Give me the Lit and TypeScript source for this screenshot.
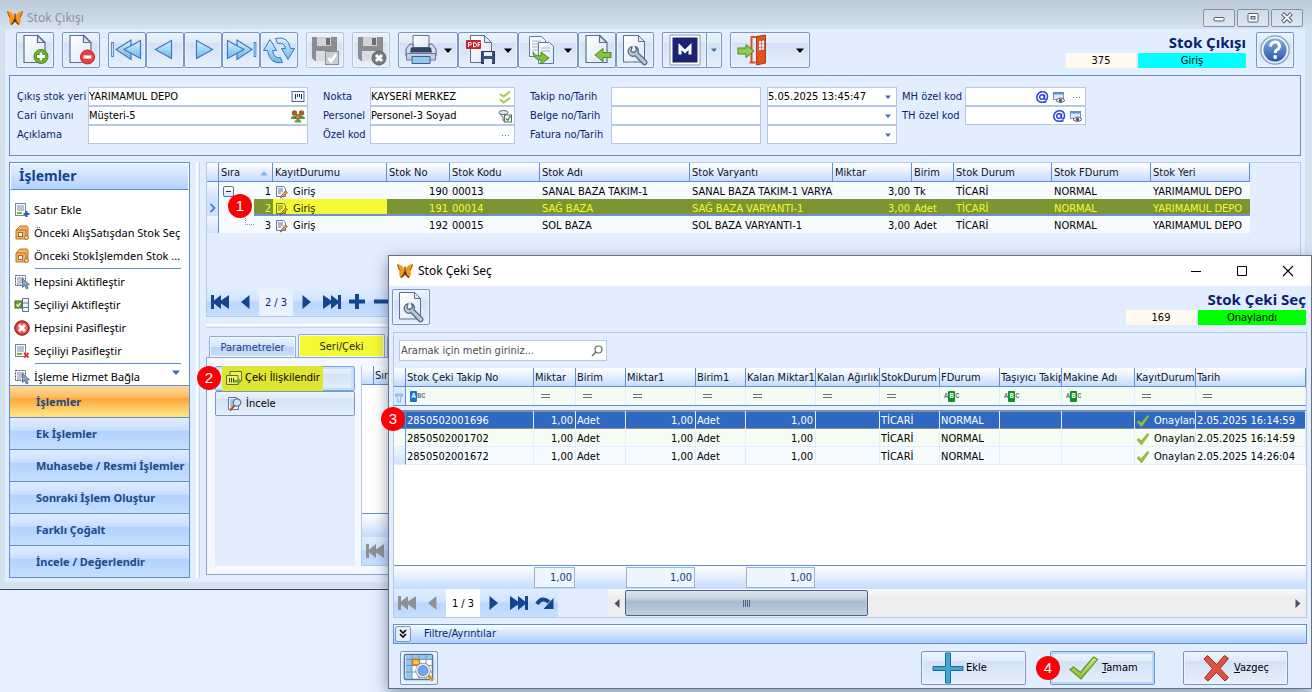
import { LitElement, html, css, svg, nothing } from "lit";
import type { TemplateResult } from "lit";
import { customElement } from "lit/decorators.js";
import { classMap } from "lit/directives/class-map.js";

const page = svg`<path d="M7 2.500h14l7 7v20H7z" fill="url(#paper)" stroke="#5b6f94" stroke-width="1.200"/><path d="M20.500 2.500v7h7z" fill="#dfe8f5" stroke="#5b6f94" stroke-width="1.200"/>`;
const floppyGrey = svg`<path d="M3 3h25v24H6l-3-3z" fill="#8b8d91"/><path d="M8 3h14v9H8z" fill="#cfd3d8"/><path d="M17 4h4v7h-4z" fill="#6c6e73"/><path d="M7 17h16v10H7z" fill="#dadde0"/>`;
const wrench = svg`<path d="M13 12.500a5 5 0 0 0-3 7.500 5 5 0 0 0 6 1.800l8 8.200a2.300 2.300 0 0 0 3.300-3.200l-8.300-8a5 5 0 0 0-1-5.300 5 5 0 0 0-1.500-1l1.200 3.500-2.700 2.500-3-1.200z" fill="#b9c6d6" stroke="#55657d" stroke-width="1.200"/>`;
const listBox = svg`<rect x="1.500" y="1.500" width="10" height="12" fill="#fff" stroke="#7184ad"/><path d="M3 4h7M3 6h7M3 8h7" stroke="#7184ad"/><path d="M3 10h5v2H3z" fill="#6fba2c"/>`;
const archive = svg`<path d="M3 4l3-3h7l1 2v9l-2 2H2V5z" fill="#f4b35e" stroke="#b5742c"/><path d="M2 5h10v9" fill="none" stroke="#b5742c"/><rect x="4.500" y="7.500" width="4" height="4" fill="#fff" stroke="#a3672a"/><circle cx="12.500" cy="12.500" r="2" fill="#f3d39b" stroke="#a3672a"/>`;
const pointerGrid = svg`<path d="M1.500 1.500h10v10h-10z" fill="none" stroke="#3e4f78" stroke-dasharray="2 1"/><path d="M3 4h7M3 6h7M3 8h7M3 10h4" stroke="#7787ac"/><path d="M8.500 4.500v9l2.200-2 1.700 3.500 1.800-.9-1.700-3.300h3z" fill="#8fa6c9" stroke="#415a86" stroke-width=".8"/>`;
const eye = svg`<path d="M1.500 2.500h10v7h-10z" fill="#dbe9fa" stroke="#7d93b5"/><path d="M1 2h11v2.500H1z" fill="#5c90cf"/><path d="M4 10.500q4.500-5 9 0-4.500 4-9 0z" fill="#fff" stroke="#4d5a70"/><circle cx="8.500" cy="10.500" r="1.700" fill="#4d5a70"/>`;

const ICONS: Record<string, [string, TemplateResult]> = {
  butterfly: ["0 0 16 16", svg`<path d="M7.500 7Q5 1 0 1q1 5 2.500 7.500Q1.500 11 3.500 15 6.500 15 8 9.500 9.500 15 12.500 15q2-4 1-6.500Q15 6 16 1q-5 0-8.500 6z" fill="#f39a1c"/><path d="M.5 1.500q1 3.500 2.500 6M15.500 1.500q-1 3.500-2.500 6" fill="none" stroke="#a3560f"/><path d="M8 3.500v9M4 14.500q3-1.500 3.500-5.500M12 14.500q-3-1.500-3.500-5.500" fill="none" stroke="#6a3410" stroke-width="1.200"/>`],
  docAdd: ["2 1 32 32", svg`${page}<circle cx="24" cy="23.500" r="7" fill="#76b82a" stroke="#4a7f14"/><path d="M24 19v9M19.500 23.500h9" stroke="#4d7d1b" stroke-width="4.500"/><path d="M24 19.500v8M20 23.500h8" stroke="#fff" stroke-width="2.800"/>`],
  docRemove: ["2 1 32 32", svg`${page}<circle cx="24.500" cy="24" r="7" fill="#e8403f" stroke="#c22"/><path d="M20.500 24h8" stroke="#fff" stroke-width="3.200"/>`],
  first: ["0 0 32 32", svg`<path d="M1.500 8v15" stroke="#3f78bd" stroke-width="2.600"/><path d="M1.500 9v13" stroke="#bfe4fb" stroke-width="1"/><path d="M20 6v19.500L5 15.500z" fill="url(#sky)" stroke="#3f78bd" stroke-width="1.200"/><path d="M29.500 6.500v18L13 15.500z" fill="url(#sky)" stroke="#3f78bd" stroke-width="1.200"/>`],
  prev: ["0 0 32 32", svg`<path d="M22.500 6.500v18L6.500 15.500z" fill="url(#sky)" stroke="#3f78bd" stroke-width="1.200"/>`],
  next: ["0 0 32 32", svg`<path d="M9.500 6.500v18l16-9z" fill="url(#sky)" stroke="#3f78bd" stroke-width="1.200"/>`],
  last: ["0 0 32 32", svg`<path d="M12 6v19.500l15-10z" fill="url(#sky)" stroke="#3f78bd" stroke-width="1.200"/><path d="M2.500 6.500v18l16.500-9z" fill="url(#sky)" stroke="#3f78bd" stroke-width="1.200"/><path d="M30 8v15" stroke="#3f78bd" stroke-width="2.600"/><path d="M30 9v13" stroke="#bfe4fb"/>`],
  refresh: ["0 0 32 32", svg`<path d="M12.500 4.500Q25 1.500 27.500 14.500h4l-6.500 11-6.500-11h4Q21.500 8 14.500 9.500z" fill="url(#sky)" stroke="#3f78bd"/><path d="M19.500 28.500Q7 31 4.500 16.500H.5l6.500-11 6.500 11h-4Q11 25 17.500 23.500z" fill="url(#sky)" stroke="#3f78bd"/>`],
  saveCheck: ["0 0 32 32", svg`${floppyGrey}<rect x="16.500" y="17.500" width="13" height="13" fill="#c9ccd0" stroke="#8d9095"/><path d="M19.500 24l2.500 3.500 5-7.500" fill="none" stroke="#fff" stroke-width="2.500"/>`],
  saveCancel: ["0 0 32 32", svg`${floppyGrey}<circle cx="24" cy="24" r="7" fill="#77797d" stroke="#606266"/><path d="M21 21l6 6M27 21l-6 6" stroke="#fff" stroke-width="3"/>`],
  printer: ["0 0 32 32", svg`<path d="M8 1.500h16v12H8z" fill="url(#paper)" stroke="#66748d"/><path d="M5 10h3v6h16v-6h3l4 5v7H1v-7z" fill="#d6dfed" stroke="#51617f"/><path d="M6 13.500h20l1 5H5z" fill="#35425f"/><path d="M1.500 19.500h29V26h-29z" fill="#c3cfe2" stroke="#66799c"/><path d="M7 22.500h18v7H7z" fill="#8fcaf3" stroke="#4a5d82"/>`],
  pdf: ["0 0 32 32", svg`<path d="M5.500 1.500h14l7 7v20h-21z" fill="url(#paper)" stroke="#5b6f94"/><path d="M19.500 1.500v7h7z" fill="#dfe8f5" stroke="#5b6f94"/><rect x="1" y="6" width="15" height="9" rx="1" fill="#cf2228"/><path d="M3.500 13V8.500H5q1.500 0 1.500 1.200T5 11H3.500M8.500 8.500v4.500q3 0 3-2.200t-3-2.300M13 13V8.500h2.500M13 10.700h2" stroke="#fff" fill="none"/><path d="M16.500 17.500h13v12h-13z" fill="#3c5378" stroke="#24344f"/><path d="M19 18h8v4h-8zM19 25h8v5h-8z" fill="#e6edf6"/>`],
  copy: ["0 0 32 32", svg`<path d="M4.500 2.500h12l4 4v16h-16z" fill="url(#paper)" stroke="#66799c"/><path d="M7 7h9M7 10h9M7 13h9M7 16h9" stroke="#9fb2cf"/><path d="M13.500 8.500h11l4 4v17h-15z" fill="url(#paper)" stroke="#66799c"/><path d="M16 14h9M16 17h9" stroke="#9fb2cf"/><path d="M8 18q1 4 8 4v-4l8 6-8 6v-4Q9 26 8 18z" fill="#7fc241" stroke="#4b8a1b"/>`],
  importDoc: ["2 1 32 32", svg`${page}<path d="M16 22l8-6.500v4h8v5h-8v4z" fill="#86c34a" stroke="#4b8a1b"/>`],
  wrenchDoc: ["0 0 32 32", svg`<path d="M4.500 1.500h15l6 6v20.500h-21z" fill="url(#paper)" stroke="#5b6f94"/><path d="M19.500 1.500v6h6z" fill="#dfe8f5" stroke="#5b6f94"/>${wrench}`],
  mBadge: ["0 0 32 32", svg`<path d="M1 1h30v30H1z" fill="#fff" stroke="#8a96b8"/><path d="M3.500 3.500h25v25h-25z" fill="#1a2470"/><path d="M11 20.500v-8l5 5 5-5v8" fill="none" stroke="#fff" stroke-width="3"/>`],
  door: ["0 0 32 32", svg`<path d="M15.500 28V3h5M13.500 28.500h6" fill="none" stroke="#d9501c" stroke-width="2"/><path d="M20.500 2.500l9-1.500v28l-9 2z" fill="#e0531f" stroke="#a93c13"/><path d="M22.500 7l6-1v10l-6 .8z" fill="#fbeedd" stroke="#a93c13" stroke-width=".6"/><path d="M25.500 6.500v10M22.500 10l6-.5M22.500 13.500l6-.5" stroke="#b26" stroke-width=".5"/><path d="M2 14h8V10.500l8 6.500-8 6.500V20H2z" fill="#8fca55" stroke="#4b8a1b"/>`],
  help: ["0 0 32 32", svg`<circle cx="16" cy="16" r="14" fill="url(#helpBall)" stroke="#8e9bb3" stroke-width="1.500"/><circle cx="16" cy="16" r="12.500" fill="none" stroke="#e9f1fb" stroke-width="2"/><path d="M11.500 12.500q.5-4.500 4.500-4.500t4.500 4q0 2.500-2.500 3.700-1.800 1-1.800 3.300" fill="none" stroke="#fff" stroke-width="3"/><circle cx="16.200" cy="23" r="1.900" fill="#fff"/>`],
  barcode: ["0 0 14 14", svg`<rect x="1" y="1.500" width="12" height="10" fill="#f5f8fe" stroke="#4c66ad"/><path d="M4.500 4v5M6.500 4v3M8.500 4v3M10.500 4v5" stroke="#222b4a"/>`],
  people: ["0 0 14 14", svg`<circle cx="3.500" cy="4" r="2.700" fill="#a4622d"/><circle cx="10.500" cy="4" r="2.700" fill="#a4622d"/><path d="M0 10q0-3 3-3t3 3M8 10q0-3 3-3t3 3" fill="#4f9a3c"/><circle cx="7" cy="8" r="2.500" fill="#c98545" stroke="#7d451b" stroke-width=".8"/><path d="M3.500 13.500q0-3 3.500-3t3.500 3z" fill="#58a743"/>`],
  checks: ["0 0 14 14", svg`<path d="M2 4L5.500 6.500 12 1.500M2 9.500L5.500 12.500 12 8" fill="none" stroke="#a5cc4b" stroke-width="2"/>`],
  filterCheck: ["0 0 14 14", svg`<ellipse cx="5.500" cy="3.500" rx="4.500" ry="2" fill="#e7edf5" stroke="#56647d"/><path d="M1.500 4.500L5 8.500v3l1.500 1V8" fill="#cfd8e6" stroke="#56647d"/><rect x="6.500" y="6" width="7" height="7" fill="#fff" stroke="#56647d"/><path d="M8 9.500l1.700 1.800L12.500 7" fill="none" stroke="#4b9a1d" stroke-width="1.400"/>`],
  dots: ["0 0 14 14", svg`<path d="M4 7.500h1M7 7.500h1M10 7.500h1" stroke="#4d7ab8"/>`],
  at: ["0 0 14 14", svg`<path d="M9.500 4.500v4q.2 1.500 1.500 1.500 1.500-.5 1.500-4Q12 1.700 7.500 1.700T1.700 7q.3 5.300 5.800 5.300 2 0 4-.8" fill="none" stroke="#2a45e0" stroke-width="1.500"/><circle cx="7" cy="7" r="2.300" fill="none" stroke="#2a45e0" stroke-width="1.500"/>`],
  eye: ["0 0 14 14", eye],
  caret: ["0 0 8 5", svg`<path d="M0 .5h8L4 5z" fill="currentColor"/>`],
  rowAdd: ["0 0 16 16", svg`${listBox}<path d="M12.500 9v6M9.500 12h6" stroke="#2c64ad" stroke-width="2.200"/>`],
  archive: ["0 0 16 16", archive],
  pointerGrid: ["0 0 16 16", pointerGrid],
  selActive: ["0 0 16 16", svg`<path d="M8.500 1.500h6v13h-6zM8.500 6h6M8.500 10.500h6" fill="#eef3fb" stroke="#5c72a5"/><rect x="1" y="4" width="7" height="7" fill="#6da33a" stroke="#3c6e17"/><path d="M2.500 7.500l1.600 1.700L6.500 6" fill="none" stroke="#fff" stroke-width="1.200"/>`],
  cancelBall: ["0 0 16 16", svg`<circle cx="8" cy="8" r="7.300" fill="#d2312f" stroke="#8e1f1d"/><circle cx="8" cy="8" r="5.500" fill="#e46a65"/><path d="M5 5l6 6M11 5l-6 6" stroke="#fff" stroke-width="2.600"/>`],
  rowDel: ["0 0 16 16", svg`${listBox}<path d="M10 10l4.500 4.500M14.500 10L10 14.500" stroke="#d33" stroke-width="2"/>`],
  linkBarcode: ["0 0 16 16", svg`<path d="M4 1.500h11.500v9H4z" fill="#f1f55a" stroke="#5a6f48"/><path d="M.5 5.500H12v9H.500z" fill="#f1f55a" stroke="#5a6f48"/><path d="M3.500 8v4.500M5.500 8v4.500M7.500 8v4.500" stroke="#33462e"/><path d="M8 10h4V7.500l3.500 3.800L12 15v-2.500H8z" fill="#6fa53d"/>`],
  inspect: ["0 0 16 16", svg`<path d="M2.500 1.500h8l2 2v10h-10z" fill="#f3f7fd" stroke="#5c72a5"/><path d="M4 4h4M4 6h3M4 8h3M4 10h3" stroke="#5c8acb"/><circle cx="11" cy="6.500" r="3.700" fill="#cfe5f8" stroke="#58779f" stroke-width="1.300"/><path d="M8.500 9.500L4 14.500" stroke="#b4572c" stroke-width="2.200"/>`],
  note: ["0 0 14 14", svg`<path d="M1.500 1.500h7l2 2v8h-9z" fill="#f4f8fd" stroke="#607ba5"/><path d="M3 4h5M3 6h5M3 8h3" stroke="#607ba5"/><path d="M7 12l-1.500 1 .5-2 4.500-5 2 1.500z" fill="#eba85a" stroke="#8a4f27" stroke-width=".8"/>`],
  noteYellow: ["0 0 14 14", svg`<path d="M1.500 1.500h7l2 2v8h-9z" fill="#f6fb36" stroke="#5c7a33"/><path d="M3 4h5M3 6h5M3 8h3" stroke="#6e8a2e"/><path d="M7 12l-1.500 1 .5-2 4.500-5 2 1.500z" fill="#eba82a" stroke="#8a4f17" stroke-width=".8"/>`],
  nFirst: ["0 0 20 16", svg`<path d="M1 1h3v5.500L11 1v5.500L19 1v14l-8-5.500V15L4 9.500V15H1z" fill="currentColor"/>`],
  nPrev: ["0 0 20 16", svg`<path d="M13.500 1v14L5 8z" fill="currentColor"/>`],
  nNext: ["0 0 20 16", svg`<path d="M6.500 1v14L15 8z" fill="currentColor"/>`],
  nLast: ["0 0 20 16", svg`<path d="M19 1h-3v5.500L9 1v5.500L1 1v14l8-5.500V15l7-5.500V15h3z" fill="currentColor"/>`],
  nAdd: ["0 0 20 16", svg`<path d="M1 7.500h16M9 0v15" stroke="currentColor" stroke-width="4"/>`],
  nDel: ["0 0 20 16", svg`<path d="M0 7.500h16" stroke="currentColor" stroke-width="4"/>`],
  nRedo: ["0 0 20 16", svg`<path d="M2 9q5-8 12-2" fill="none" stroke="currentColor" stroke-width="4"/><path d="M18.500 3v11H8.500z" fill="currentColor"/>`],
  search: ["0 0 14 14", svg`<circle cx="8.500" cy="5.500" r="3.500" fill="none" stroke="#666" stroke-width="1.200"/><path d="M6 8l-4 4" stroke="#666" stroke-width="1.400"/>`],
  funnel: ["-1 -3 13 15", svg`<path d="M1 1.500h8v2L6.500 6v5h-3V6L1 3.500zM1 3.500h8" fill="#e3f0ff" stroke="#6a9fdc"/>`],
  rowMark: ["0 0 16 16", svg`<path d="M3.500 4l4 4-4 4" fill="none" stroke="#4d86cf" stroke-width="2"/>`],
  tick: ["0 0 14 14", svg`<path d="M1 8l2-1.500 2 2.500 6.500-7.500 1.500 1L5.500 13z" fill="#97c23c" stroke="#76a52a" stroke-width=".6"/>`],
  gridSearch: ["0 0 32 32", svg`<rect x="1.500" y="2.500" width="28" height="25" rx="1.500" fill="#fff" stroke="#56769f" stroke-width="1.500"/><path d="M3 3h26v4.500H9V27H3z" fill="#8fc7ea"/><path d="M9 3v24M16 3v24M23 3v24M3 7.500h26M3 13.500h26M3 20h26" stroke="#6c97c3" fill="none"/><path d="M9.500 7.500h7v5.500h-7z" fill="#fbc65a" stroke="#cf7417" stroke-width="1.400"/><circle cx="20" cy="18.500" r="6.200" fill="#6fa8ea" stroke="#74879f" stroke-width="3"/><circle cx="20" cy="18.500" r="6.200" fill="none" stroke="#e9eef4" stroke-width="1.600"/><path d="M25 23.500l5 5" stroke="#e0913c" stroke-width="3.200"/>`],
  bigPlus: ["0 0 32 32", svg`<path d="M13.500 1h5v13.500H31v4H18.500V31h-5V18.500H1v-4h12.500z" fill="#43a6d3" stroke="#1d6d9b"/>`],
  bigTick: ["0 0 32 32", svg`<path d="M2 17.500l3.500-2.500 7 5.500L25.500 5l4 2.500L13 27z" fill="url(#leaf)" stroke="#5f9320" stroke-width="1.200"/>`],
  bigCross: ["0 0 32 32", svg`<path d="M4 7l3.500-3.500 9 9 8-9 4 3-8.500 10 8.500 9-3.500 3.500-8.500-8.500L8 29l-3.500-3 8-9.500z" fill="#dc5344" stroke="#a8281c"/>`],
};

const icon = (name: string, cls = "") =>
  html`<svg class="icon ${cls}" viewBox=${ICONS[name][0]} aria-hidden="true">${ICONS[name][1]}</svg>`;

interface Column { label: string; width?: number; num?: boolean; filter?: string }

const INDICATOR_WIDTH = 12;
const STOCK_COLUMNS: Column[] = [
  { label: "Sıra", width: 54, num: true },
  { label: "KayıtDurumu", width: 114 },
  { label: "Stok No", width: 63, num: true },
  { label: "Stok Kodu", width: 90 },
  { label: "Stok Adı", width: 150 },
  { label: "Stok Varyantı", width: 143 },
  { label: "Miktar", width: 79, num: true },
  { label: "Birim", width: 42 },
  { label: "Stok Durum", width: 98 },
  { label: "Stok FDurum", width: 99 },
  { label: "Stok Yeri", width: 99 },
];
const STOCK_WIDTH = STOCK_COLUMNS.reduce((sum, c) => sum + (c.width ?? 0), INDICATOR_WIDTH);
const STOCK_ROWS = [
  ["1", "Giriş", "190", "00013", "SANAL BAZA TAKIM-1", "SANAL BAZA TAKIM-1 VARYANTI-1", "3,00", "Tk", "TİCARİ", "NORMAL", "YARIMAMUL DEPO"],
  ["2", "Giriş", "191", "00014", "SAĞ BAZA", "SAĞ BAZA VARYANTI-1", "3,00", "Adet", "TİCARİ", "NORMAL", "YARIMAMUL DEPO"],
  ["3", "Giriş", "192", "00015", "SOL BAZA", "SOL BAZA VARYANTI-1", "3,00", "Adet", "TİCARİ", "NORMAL", "YARIMAMUL DEPO"],
];

const PICK_COLUMNS: Column[] = [
  { label: "Stok Çeki Takip No", width: 128, filter: "blue" },
  { label: "Miktar", width: 42, num: true, filter: "eq" },
  { label: "Birim", width: 50, filter: "eq" },
  { label: "Miktar1", width: 70, num: true, filter: "eq" },
  { label: "Birim1", width: 50, filter: "eq" },
  { label: "Kalan Miktar1", width: 70, num: true, filter: "eq" },
  { label: "Kalan Ağırlık", width: 64, filter: "eq" },
  { label: "StokDurum", width: 60, filter: "eq" },
  { label: "FDurum", width: 60, filter: "green" },
  { label: "Taşıyıcı Takip", width: 62, filter: "green" },
  { label: "Makine Adı", width: 73, filter: "green" },
  { label: "KayıtDurumu", width: 61, filter: "eq" },
  { label: "Tarih", filter: "eq" },
];
const PICK_ROWS = [
  ["2850502001696", "1,00", "Adet", "1,00", "Adet", "1,00", "", "TİCARİ", "NORMAL", "", "", "Onaylandı", "2.05.2025 16:14:59"],
  ["2850502001702", "1,00", "Adet", "1,00", "Adet", "1,00", "", "TİCARİ", "NORMAL", "", "", "Onaylandı", "2.05.2025 16:14:59"],
  ["2850502001672", "1,00", "Adet", "1,00", "Adet", "1,00", "", "TİCARİ", "NORMAL", "", "", "Onaylandı", "2.05.2025 14:26:04"],
];
const PICK_SUMS = ["", "1,00", "", "1,00", "", "1,00", "", "", "", "", "", "", ""];

const TASKS: [string, string][][] = [
  [["rowAdd", "Satır Ekle"], ["archive", "Önceki AlışSatışdan Stok Seç"], ["archive", "Önceki Stokİşlemden Stok ..."]],
  [["pointerGrid", "Hepsini Aktifleştir"], ["selActive", "Seçiliyi Aktifleştir"], ["cancelBall", "Hepsini Pasifleştir"], ["rowDel", "Seçiliyi Pasifleştir"]],
];
const GROUPS = ["İşlemler", "Ek İşlemler", "Muhasebe / Resmi İşlemler", "Sonraki İşlem Oluştur", "Farklı Çoğalt", "İncele / Değerlendir"];

@customElement("app-root")
export class AppRoot extends LitElement {
  static styles = css`
    :host {
      display: block;
      position: relative;
      min-height: 100vh;
      overflow: hidden;
      background: #e3eeff;
      color: #000;
      font: 11px/14px "DejaVu Sans Condensed", "DejaVu Sans", sans-serif;
      --line: #5f8fd0;
      --soft: #b3c9e6;
      --navy: #0a1f70;
      --page: #e2eeff;
      --head: linear-gradient(#fff, #e3eeff 50%, #c3dbff);
      --glass: linear-gradient(#ebf3fd, #e0ebf9 28%, #d2e1f4 30%, #dbe7f7 60%, #e6f0fd);
      --mark: #f5f933;
      --label: "Noto Sans", "Open Sans", sans-serif;
    }
    * { box-sizing: border-box; }
    button, input { font: inherit; color: inherit; margin: 0; padding: 0; }
    button { border: 0; background: none; }
    .defs { position: absolute; width: 0; height: 0; }
    .icon { display: block; width: 16px; height: 16px; flex: none; }
    .i14 { width: 14px; height: 14px; }
    .i32 { width: 32px; height: 32px; }
    .nav-ic { width: 20px; height: 16px; }
    .car { width: 8px; height: 5px; }
    .tiny { width: 6px; height: 4px; margin-right: 3px; color: #3d6fae; }

    /* main window */
    .window { border-bottom: 1px solid #45434f; background: #d5e3f1; padding: 0 7px 7px 5px; }
    .caption { display: flex; align-items: center; justify-content: space-between; height: 29px; margin: 0 -7px 0 -5px; padding: 6px 9px 0 7px; background: linear-gradient(#bccad8, #d5e2ef); color: #8b929b; font: 12px/16px var(--label); }
    .caption-title { display: flex; align-items: center; gap: 4px; }
    .caption-buttons { display: flex; gap: 2px; }
    .caption-buttons button { display: flex; align-items: center; justify-content: center; width: 32px; height: 18px; border: 1px solid #8593a5; border-radius: 2px; background: linear-gradient(#d0dbe7, #dde7f2); }
    .client { background: var(--page); padding: 3px 4px 4px; }
    .toolbar { display: flex; gap: 8px; padding: 0 7px; }
    .tool-group { display: flex; }
    .tool { display: flex; align-items: center; justify-content: center; width: 38px; height: 36px; border: 1px solid #7796c2; border-radius: 2px; background: var(--glass); box-shadow: inset 0 0 0 1px #eef5ff; }
    .tool.drop { width: 60px; gap: 7px; }
    .tool.wide { width: 80px; gap: 28px; }
    .tool.body { width: 44px; border-right: 0; border-radius: 2px 0 0 2px; }
    .tool.side { width: 16px; border-radius: 0 2px 2px 0; }
    .tool.side .tiny { margin: 0; }
    .tool:disabled { border-color: #b4c4da; }
    .spacer { flex: 1; }
    .heading { text-align: right; }
    .heading h1 { margin: 0; height: 21px; font: bold 15px/21px var(--label); color: var(--navy); }
    .states { display: flex; gap: 2px; justify-content: flex-end; text-align: center; line-height: 15px; }
    .count { width: 70px; background: #fffaf0; }
    .state { width: 108px; background: #0ff; }
    .state.ok { background: #0f0; }
    .help { margin-left: 2px; }

    .form { display: flex; margin-top: 7px; padding: 11px 9px 11px 7px; border: 1px solid var(--line); color: var(--navy); }
    .fields { display: grid; grid-auto-rows: 19px; align-content: start; align-items: center; }
    .fields label { white-space: nowrap; }
    .f-a { grid-template-columns: 71px 220px; }
    .f-b { grid-template-columns: 47px 145px; margin-left: 15px; }
    .f-c { grid-template-columns: 81px 150px 136px; margin-left: 15px; }
    .f-d { grid-template-columns: 63px 121px; margin-left: 5px; }
    .f-c .box + .box { margin-left: 6px; }
    .box { display: flex; align-items: center; gap: 3px; height: 19px; padding-right: 2px; border: 1px solid var(--soft); background: #fff; color: #000; }
    .box input { flex: 1; min-width: 0; width: 100%; border: 0; outline: 0; background: none; height: 15px; }

    .work { display: flex; margin-top: 6px; }
    .sidebar { display: flex; flex-direction: column; width: 181px; border: 1px solid var(--line); background: #fff; flex: none; }
    .sidebar h2 { margin: 0; height: 27px; padding-left: 8px; border: 1px solid #fff; border-bottom: 1px solid var(--line); background: linear-gradient(#e6f0ff, #b3d2ff); font: bold 14px/24px var(--label); color: #15448f; }
    .tasks { flex: 1; padding: 8px 0 0 4px; font: 11px/23px var(--label); }
    .task { display: flex; align-items: center; gap: 4px; height: 23px; width: 100%; white-space: nowrap; text-align: left; }
    .task:last-child { margin-bottom: -3px; }
    .rule { height: 1px; margin: 1px 8px 1px 21px; background: var(--line); }
    .task .tiny { width: 8px; height: 5px; margin: 0 9px 8px auto; }
    .groups { display: flex; flex-direction: column; position: relative; }
    .group { height: 32px; padding-left: 26px; border-top: 1px solid var(--line); text-align: left; white-space: nowrap; background: linear-gradient(#e0edff, #c8deff 40%, #b2d1ff 42%, #c6dfff); color: #1f4a87; font: bold 11px/30px var(--label); }
    .group.on { background: linear-gradient(#fdd9a0, #fdbd62 35%, #fda63a 42%, #ffe07c 90%); }
    .splitter { width: 4px; margin: 0 6px; border-left: 2px solid #fff; border-right: 1px solid #bcd8fb; flex: none; }
    .main { flex: 1; min-width: 0; position: relative; }
    .panel { display: flex; flex-direction: column; border: 1px solid var(--soft); }
    .stock { height: 155px; }

    table { border-collapse: separate; border-spacing: 0; table-layout: fixed; align-self: flex-start; }
    .fill { width: 100%; }
    .c-ind { width: 12px; }
    th, td { padding: 0 2px; overflow: hidden; white-space: nowrap; text-align: left; font-weight: normal; }
    th { height: 19px; padding: 1px 1px 0; line-height: 17px; border-right: 1px solid var(--line); border-bottom: 1px solid var(--line); background: var(--head); color: #0d1526; }
    .stock th { padding: 2px 2px 0; line-height: 16px; }
    .num { text-align: right; }
    .stock td { height: 17px; padding-top: 2px; line-height: 15px; background: #f6fbff; }
    .stock td.ind, .pick td.ind { border-right: 1px solid var(--line); padding: 0; background: linear-gradient(#f5f9ff, #cfe2ff); }
    .stock tr.sel td { background: linear-gradient(#7a9531 15px, #6f91cf 15px); color: var(--mark); }
    .stock tr.sel td.ind { background: #cfe2ff; }
    .stock tr.sel td.mark { background: linear-gradient(var(--mark) 15px, #6f91cf 15px); color: #16250a; }
    .stock tr.sel td.first { background: linear-gradient(90deg, #f6fbff 35px, transparent 35px), linear-gradient(#7a9531 15px, #6f91cf 15px); }
    .th-in, .td-in, .tree { display: flex; align-items: center; justify-content: space-between; }
    .td-in { justify-content: flex-start; gap: 4px; }
    .sort { color: #86b4ec; transform: scaleY(-1); margin-right: 2px; }
    .expander { display: block; width: 11px; height: 11px; margin-left: 2px; border: 1px solid #5d6f8f; border-radius: 2px; background: linear-gradient(#fff, #dbe5f3); position: relative; }
    .expander::after { content: ""; position: absolute; left: 2px; right: 2px; top: 4px; height: 1px; background: #234; }
    .twig { width: 9px; height: 7px; margin: 0 0 8px 24px; border-left: 1px dotted #6a96cd; border-bottom: 1px dotted #6a96cd; }

    .nav { display: flex; height: 28px; background: linear-gradient(#e1edff, #d0e3ff 46%, #bad6ff 50%, #c6dfff); color: #14458f; }
    .nav button { display: flex; align-items: center; justify-content: center; width: 26px; }
    .nav button:disabled { color: #8f9194; }
    .nav .pos { width: 34px; background: #e8f1ff; text-align: center; line-height: 29px; color: var(--navy); }
    .hsplit { height: 4px; margin: 7px 0 6px; border-top: 2px solid #fff; border-bottom: 1px solid #bcd8fb; }

    .tabs { display: flex; gap: 2px; padding-left: 3px; align-items: flex-end; }
    .tab { height: 21px; width: 87px; padding-top: 2px; border: 1px solid #8fa9cd; border-bottom: 0; border-radius: 2px 2px 0 0; background: linear-gradient(#e9f2ff, #d5e4f8 50%, #b9d1f3 52%, #cfe0f8); box-shadow: inset 0 0 0 1px #f3f8ff; color: #17418c; }
    .tab.on { height: 23px; background: var(--mark); color: #1c2a12; }
    .tabpage { display: flex; gap: 6px; height: 218px; margin-bottom: 3px; padding: 8px; border: 1px solid #8fa9cd; background: #f5f9ff; }
    .actions { width: 140px; background: var(--page); flex: none; }
    .action { position: relative; display: flex; align-items: center; gap: 4px; width: 140px; height: 25px; padding-left: 10px; border: 1px solid #7c97c0; border-radius: 2px; background: var(--glass); }
    .action.on { border-color: #7da5dc; box-shadow: inset -1px 0 0 2px #c3e0ff; }
    .action .hl { display: flex; align-items: center; gap: 3px; margin: -3px 0 -2px -4px; padding-left: 4px; width: 101px; height: 25px; background: #dfe62f; flex: none; }
    .detail { flex: 1; display: flex; flex-direction: column; border: 1px solid var(--soft); border-top: 0; background: #fff; }
    .detail .foot { margin-top: auto; height: 24px; border-top: 1px solid var(--line); background: var(--head); }

    .badge { position: absolute; z-index: 3; display: flex; align-items: center; justify-content: center; width: 24px; height: 24px; border-radius: 50%; background: #fb0007; color: #fff; font: 15px/24px "Liberation Sans", sans-serif; }
    .b1 { left: 22px; top: 32px; }
    .b2 { left: -19px; top: -1px; }
    .b3 { left: -8px; top: 151px; }
    .b4 { left: -15px; top: 4px; }

    /* selection dialog */
    .dialog { position: absolute; left: 388px; right: 0; top: 255px; z-index: 2; border: 1px solid #6b7078; background: var(--page); box-shadow: 0 4px 14px rgba(20, 35, 70, .45); }
    .dlg-caption { display: flex; align-items: center; gap: 5px; height: 30px; padding: 0 17px 0 8px; background: #fff; font: 12px/16px var(--label); }
    .dlg-caption .sys { display: flex; gap: 34px; margin-left: auto; }
    .sysic { width: 12px; height: 12px; display: block; }
    .dlg-head { display: flex; justify-content: space-between; padding: 3px 5px 7px 3px; }
    .pick { margin: 0 4px; }
    .find { margin: 7px 5px; height: 21px; width: 208px; color: #333; }
    .find input { padding-left: 1px; }
    .find input::placeholder { color: #4b4b4b; opacity: 1; }
    .find-label { position: absolute; width: 1px; height: 1px; overflow: hidden; clip-path: inset(50%); }
    .rows { height: 197px; background: #fff; }
    .filter td { height: 18px; background: #f3fbf3; border-right: 1px solid #e2edff; padding: 0 4px; }
    .filter td.ind { background: #dceaff; padding: 0; }
    .filter .ind .icon { width: 11px; height: 17px; }
    .gap td { height: 6px; padding: 0; border-top: 1px solid var(--line); border-bottom: 1px solid var(--line); background: #e6f0ff; }
    .pick .data td { height: 18px; padding: 2px 2px 0 1px; line-height: 15px; border-right: 1px solid #e2edff; border-bottom: 1px solid #e2edff; background: #f6fbff; }
    .pick .data td.ind { background: linear-gradient(#f0f6ff, #cfe2ff); border-right-color: var(--line); }
    .pick .data.even td { background: #f4fcf3; }
    .pick .data.sel td { border-bottom: 0; padding-bottom: 1px; background: linear-gradient(#8e8f8c, #8e8f8c) 0 0 / 100% 1px no-repeat, linear-gradient(#8e8f8c, #8e8f8c) 0 100% / 100% 1px no-repeat, #2f68c3; color: #fff; }
    .eq { display: block; width: 9px; height: 4px; margin-left: 3px; border-top: 1px solid #6b7075; border-bottom: 1px solid #6b7075; }
    .abc { display: flex; font: bold 7px/11px "Liberation Mono", monospace; color: #777; }
    .abc span { text-align: center; }
    .abc .k { width: 7px; border-radius: 1px; color: #fff; background: #0a9426; }
    .abc.bl .k { background: #0c76d6; }
    .sums { background: var(--head); border-top: 1px solid var(--line); height: 24px; }
    .sums td { height: 23px; padding: 0 1px 0 0; }
    .sum { height: 21px; padding-right: 2px; border: 1px solid #94b5e0; background: #edf5ff; line-height: 20px; color: #1a3580; }
    .pick .nav-row { display: flex; height: 28px; }
    .pick .pos { background: #fff; color: #000; }
    .scroll { display: flex; flex: 1; margin-left: 50px; padding: 1px 0; background: linear-gradient(#fbfbfb, #ededed 30%); }
    .arrow { width: 17px; display: flex; align-items: center; justify-content: center; }
    .arrow svg { width: 6px; height: 9px; display: block; }
    .thumb { width: 243px; border: 1px solid #4f628c; border-radius: 2px; background: linear-gradient(#dbe3ec, #c9d3df 30%, #a8b9cf 45%, #c3d0de); display: flex; align-items: center; justify-content: center; gap: 1px; }
    .thumb i { width: 1px; height: 7px; background: #4f628c; }
    .arrow.end { margin-left: auto; }
    .fold { display: flex; align-items: center; gap: 13px; height: 20px; margin: 6px 4px 7px; padding: 0 1px; border: 1px solid var(--line); background: linear-gradient(#fff, #dcebff 30%, #aecfff); color: var(--navy); }
    .fold button { display: flex; align-items: center; justify-content: center; width: 16px; height: 16px; border: 1px solid #7c97c0; border-radius: 2px; background: #e4eefb; }
    .dlg-foot { display: flex; padding: 0 23px 3px 11px; }
    .push { position: relative; display: flex; align-items: center; gap: 2px; width: 105px; height: 34px; padding-left: 10px; border: 1px solid #7796c2; border-radius: 2px; background: var(--glass); box-shadow: inset 0 0 0 1px #eef5ff; }
    .push.ok { margin: 0 28px 0 24px; padding-left: 17px; box-shadow: inset 0 0 0 2px #b4dbff; }
    .push.no { padding-left: 16px; }
    .tool.low { height: 34px; }
    u { text-underline-offset: 1px; }
  `;

  private tool(name: string, label: string, cls = "", disabled = false) {
    return html`<button class="tool ${cls}" type="button" title=${label} ?disabled=${disabled}>${icon(name, "i32")}</button>`;
  }

  private drop(name: string, label: string, cls = "drop") {
    return html`<button class="tool ${cls}" type="button" title=${label}>${icon(name, "i32")}${icon("caret", "car")}</button>`;
  }

  private field(id: string, value: string, icons: string[] = [], aria = "") {
    return html`<div class="box">
      <input id=${id} type="text" .value=${value} aria-label=${aria || nothing} />
      ${icons.map((n) => (n === "caret" ? icon(n, "tiny") : icon(n, "i14")))}
    </div>`;
  }

  private cols(columns: Column[]) {
    return html`<colgroup><col class="c-ind" />${columns.map((c) =>
      c.width ? html`<col style="width:${c.width}px" />` : html`<col />`)}</colgroup>`;
  }

  private navButtons(names: [string, string, boolean?][]) {
    return names.map(([n, t, off]) =>
      html`<button type="button" title=${t} ?disabled=${!!off}>${icon(n, "nav-ic")}</button>`);
  }

  private renderToolbar() {
    return html`<div class="toolbar">
      ${this.tool("docAdd", "Yeni")} ${this.tool("docRemove", "Sil")}
      <div class="tool-group">
        ${this.tool("first", "İlk")}${this.tool("prev", "Önceki")}${this.tool("next", "Sonraki")}${this.tool("last", "Son")}${this.tool("refresh", "Yenile")}
      </div>
      ${this.tool("saveCheck", "Kaydet", "", true)} ${this.tool("saveCancel", "İptal", "", true)}
      <div class="tool-group">
        ${this.drop("printer", "Yazdır")}${this.drop("pdf", "PDF")}${this.drop("copy", "Kopyala")}${this.tool("importDoc", "Aktar")}${this.tool("wrenchDoc", "Ayarlar")}
      </div>
      <div class="tool-group">
        <button class="tool body" type="button" title="M">${icon("mBadge", "i32")}</button>
        <button class="tool side" type="button" title="Seçenekler">${icon("caret", "tiny")}</button>
      </div>
      ${this.drop("door", "Çıkış", "wide")}
      <div class="spacer"></div>
      <div class="heading">
        <h1>Stok Çıkışı</h1>
        <div class="states"><span class="count">375</span><span class="state">Giriş</span></div>
      </div>
      ${this.tool("help", "Yardım", "help")}
    </div>`;
  }

  private renderForm() {
    return html`<form class="form">
      <div class="fields f-a">
        <label for="yer">Çıkış stok yeri</label>${this.field("yer", "YARIMAMUL DEPO", ["barcode"])}
        <label for="cari">Cari ünvanı</label>${this.field("cari", "Müşteri-5", ["people"])}
        <label for="acik">Açıklama</label>${this.field("acik", "")}
      </div>
      <div class="fields f-b">
        <label for="nokta">Nokta</label>${this.field("nokta", "KAYSERİ MERKEZ", ["checks"])}
        <label for="pers">Personel</label>${this.field("pers", "Personel-3 Soyad", ["filterCheck"])}
        <label for="ozel">Özel kod</label>${this.field("ozel", "", ["dots"])}
      </div>
      <div class="fields f-c">
        <label for="takip">Takip no/Tarih</label>${this.field("takip", "")}${this.field("takipT", "5.05.2025 13:45:47", ["caret"], "Takip tarihi")}
        <label for="belge">Belge no/Tarih</label>${this.field("belge", "")}${this.field("belgeT", "", ["caret"], "Belge tarihi")}
        <label for="fatura">Fatura no/Tarih</label>${this.field("fatura", "")}${this.field("faturaT", "", ["caret"], "Fatura tarihi")}
      </div>
      <div class="fields f-d">
        <label for="mh">MH özel kod</label>${this.field("mh", "", ["at", "eye", "dots"])}
        <label for="th">TH özel kod</label>${this.field("th", "", ["at", "eye"])}
      </div>
    </form>`;
  }

  private renderSidebar() {
    return html`<nav class="sidebar">
      <h2>İşlemler</h2>
      <div class="tasks">
        ${TASKS.map((set) => html`${set.map(([n, t]) =>
          html`<button class="task" type="button">${icon(n)}<span>${t}</span></button>`)}<div class="rule"></div>`)}
        <button class="task" type="button">${icon("pointerGrid")}<span>İşleme Hizmet Bağla</span>${icon("caret", "tiny")}</button>
      </div>
      <div class="groups">
        ${GROUPS.map((g, i) => html`<button type="button" class=${classMap({ group: true, on: i === 0 })}>${g}</button>`)}
      </div>
    </nav>`;
  }

  private renderStock() {
    return html`<section class="panel stock">
      <table style="width:${STOCK_WIDTH}px">
        ${this.cols(STOCK_COLUMNS)}
        <thead><tr><th></th>${STOCK_COLUMNS.map((c, i) => i === 0
          ? html`<th><div class="th-in">${c.label}${icon("caret", "car sort")}</div></th>`
          : html`<th>${c.label}</th>`)}</tr></thead>
        <tbody>
          ${STOCK_ROWS.map((row, r) => html`<tr class=${r === 1 ? "sel" : ""}>
            <td class="ind">${r === 1 ? icon("rowMark") : nothing}</td>
            ${row.map((v, i) => {
              if (i === 0) return html`<td class="num first"><div class="tree">${r === 0 ? html`<span class="expander"></span>` : r === 2 ? html`<span class="twig"></span>` : html`<span></span>`}<span>${v}</span></div></td>`;
              if (i === 1) return html`<td class="mark"><div class="td-in">${icon(r === 1 ? "noteYellow" : "note", "i14")}<span>${v}</span></div></td>`;
              return html`<td class=${STOCK_COLUMNS[i].num ? "num" : ""}>${v}</td>`;
            })}
          </tr>`)}
        </tbody>
      </table>
      <span class="badge b1">1</span>
      <div class="spacer"></div>
      <div class="nav">
        ${this.navButtons([["nFirst", "İlk"], ["nPrev", "Önceki"]])}<span class="pos">2 / 3</span>
        ${this.navButtons([["nNext", "Sonraki"], ["nLast", "Son"], ["nAdd", "Ekle"], ["nDel", "Sil"]])}
      </div>
    </section>`;
  }

  private renderLower() {
    return html`<div class="hsplit"></div>
      <div class="tabs" role="tablist">
        <button class="tab" type="button" role="tab">Parametreler</button>
        <button class="tab on" type="button" role="tab" aria-selected="true">Seri/Çeki</button>
        <button class="tab" type="button" role="tab" aria-label="Diğer"></button>
      </div>
      <section class="tabpage">
        <div class="actions">
          <button class="action on" type="button"><span class="hl">${icon("linkBarcode")}Çeki İlişkilendir</span><span class="badge b2">2</span></button>
          <button class="action" type="button">${icon("inspect")}İncele</button>
        </div>
        <div class="detail">
          <table class="fill"><colgroup><col class="c-ind" /><col /></colgroup><thead><tr><th></th><th>Sıra</th></tr></thead></table>
          <div class="foot"></div>
          <div class="nav">${this.navButtons([["nFirst", "İlk", true]])}</div>
        </div>
      </section>`;
  }

  private filterMark(kind?: string) {
    if (kind === "blue") return html`<span class="abc bl"><span class="k">A</span><span>BC</span></span>`;
    if (kind === "green") return html`<span class="abc"><span>A</span><span class="k">B</span><span>C</span></span>`;
    return html`<span class="eq"></span>`;
  }

  private renderDialog() {
    return html`<section class="dialog" role="dialog" aria-label="Stok Çeki Seç">
      <div class="dlg-caption">${icon("butterfly")}<span>Stok Çeki Seç</span>
        <div class="sys">
          <button type="button" aria-label="Küçült"><svg class="sysic" viewBox="0 0 12 12"><path d="M1 6.500h10" stroke="#000"/></svg></button>
          <button type="button" aria-label="Büyüt"><svg class="sysic" viewBox="0 0 12 12"><path d="M1.500 1.500h9v9h-9z" fill="none" stroke="#000"/></svg></button>
          <button type="button" aria-label="Kapat"><svg class="sysic" viewBox="0 0 12 12"><path d="M1 1l10 10M11 1L1 11" stroke="#000" stroke-width="1.100"/></svg></button>
        </div>
      </div>
      <div class="dlg-head">
        ${this.tool("wrenchDoc", "Ayarlar")}
        <div class="heading">
          <h1>Stok Çeki Seç</h1>
          <div class="states"><span class="count">169</span><span class="state ok">Onaylandı</span></div>
        </div>
      </div>
      <div class="panel pick">
        <label class="find-label" for="ara">Ara</label>
        <div class="box find"><input id="ara" type="text" placeholder="Aramak için metin giriniz..." />${icon("search", "i14")}</div>
        <div class="rows">
          <table class="fill">
            ${this.cols(PICK_COLUMNS)}
            <thead><tr><th></th>${PICK_COLUMNS.map((c) => html`<th>${c.label}</th>`)}</tr></thead>
            <tbody>
              <tr class="filter"><td class="ind">${icon("funnel")}</td>${PICK_COLUMNS.map((c) => html`<td>${this.filterMark(c.filter)}</td>`)}</tr>
              <tr class="gap"><td colspan="14"></td></tr>
              ${PICK_ROWS.map((row, r) => html`<tr class=${classMap({ data: true, sel: r === 0, even: r === 1 })}>
                <td class="ind"></td>
                ${row.map((v, i) => i === 11
                  ? html`<td><div class="td-in">${icon("tick", "i14")}<span>${v}</span></div></td>`
                  : html`<td class=${PICK_COLUMNS[i].num ? "num" : ""}>${v}</td>`)}
              </tr>`)}
            </tbody>
          </table>
        </div>
        <div class="sums"><table class="fill">${this.cols(PICK_COLUMNS)}<tbody><tr><td></td>${PICK_SUMS.map((s) =>
          html`<td>${s ? html`<div class="sum num">${s}</div>` : nothing}</td>`)}</tr></tbody></table></div>
        <div class="nav-row">
          <div class="nav">
            ${this.navButtons([["nFirst", "İlk", true], ["nPrev", "Önceki", true]])}<span class="pos">1 / 3</span>
            ${this.navButtons([["nNext", "Sonraki"], ["nLast", "Son"], ["nRedo", "Yenile"]])}
          </div>
          <div class="scroll">
            <span class="arrow"><svg viewBox="0 0 6 9"><path d="M5.500 0v9L.5 4.500z" fill="#46536f"/></svg></span>
            <div class="thumb"><i></i><i></i><i></i><i></i></div>
            <span class="arrow end"><svg viewBox="0 0 6 9"><path d="M.5 0v9l5-4.500z" fill="#46536f"/></svg></span>
          </div>
        </div>
      </div>
      <div class="fold">
        <button type="button" aria-label="Filtre/Ayrıntılar"><svg class="sysic" viewBox="0 0 12 12"><path d="M3 2l3 3 3-3M3 6l3 3 3-3" fill="none" stroke="#000" stroke-width="1.600"/></svg></button>
        <span>Filtre/Ayrıntılar</span>
      </div>
      <div class="dlg-foot">
        ${this.tool("gridSearch", "Görünüm", "low")}
        <div class="spacer"></div>
        <button class="push" type="button">${icon("bigPlus", "i32")}<span>Ekle</span></button>
        <button class="push ok" type="button">${icon("bigTick", "i32")}<span><u>T</u>amam</span><span class="badge b4">4</span></button>
        <button class="push no" type="button">${icon("bigCross", "i32")}<span><u>V</u>azgeç</span></button>
      </div>
      <span class="badge b3">3</span>
    </section>`;
  }

  render() {
    return html`
      <svg class="defs" aria-hidden="true"><defs>
        <linearGradient id="paper" x1="0" y1="0" x2="1" y2="1"><stop offset="0" stop-color="#fff"/><stop offset="1" stop-color="#dde6f5"/></linearGradient>
        <linearGradient id="sky" x1="0" y1="0" x2="0" y2="1"><stop offset="0" stop-color="#d9f1ff"/><stop offset="1" stop-color="#6db9ea"/></linearGradient>
        <linearGradient id="leaf" x1="0" y1="0" x2="0" y2="1"><stop offset="0" stop-color="#cfe68a"/><stop offset="1" stop-color="#8cbf3a"/></linearGradient>
        <linearGradient id="helpBall" x1="0" y1="0" x2="0" y2="1"><stop offset="0" stop-color="#8fb4e3"/><stop offset="1" stop-color="#1e4fa8"/></linearGradient>
      </defs></svg>
      <div class="window">
        <div class="caption">
          <div class="caption-title">${icon("butterfly")}<span>Stok Çıkışı</span></div>
          <div class="caption-buttons">
            <button type="button" aria-label="Küçült"><svg class="sysic" viewBox="0 0 12 12"><rect x="1" y="5.500" width="10" height="3.500" rx="1" fill="#fff" stroke="#555d68"/></svg></button>
            <button type="button" aria-label="Büyüt"><svg class="sysic" viewBox="0 0 12 12"><rect x="1" y="1.500" width="10" height="8.500" rx="1" fill="#fff" stroke="#555d68"/><rect x="4" y="4.500" width="4" height="2.500" fill="#ccd6e2" stroke="#555d68"/></svg></button>
            <button type="button" aria-label="Kapat"><svg class="sysic" viewBox="0 0 12 12"><path d="M1.500 1.500l9 8.500M10.500 1.500l-9 8.500" stroke="#555d68" stroke-width="4"/><path d="M2 2l8 7.500M10 2L2 9.500" stroke="#fff" stroke-width="1.800"/></svg></button>
          </div>
        </div>
        <div class="client">
          ${this.renderToolbar()} ${this.renderForm()}
          <div class="work">
            ${this.renderSidebar()}
            <div class="splitter"></div>
            <div class="main">${this.renderStock()} ${this.renderLower()}</div>
          </div>
        </div>
      </div>
      ${this.renderDialog()}
    `;
  }
}
